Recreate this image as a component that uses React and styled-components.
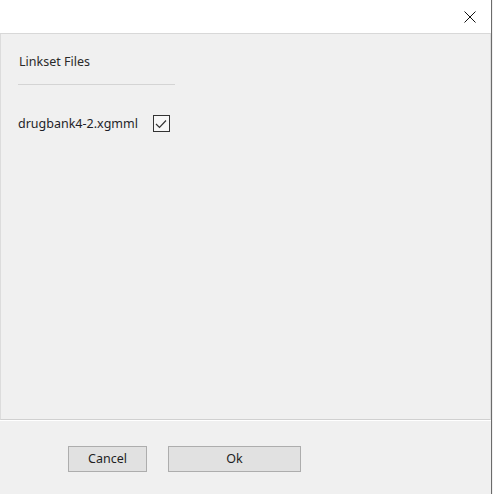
import React from "react";
import styled, { createGlobalStyle } from "styled-components";

const Global = createGlobalStyle`
  html, body {
    margin: 0;
    padding: 0;
    background: #f0f0f0;
  }
  body {
    font-family: "Segoe UI", "Noto Sans", "Liberation Sans", sans-serif;
    font-size: 12.5px;
    color: #1e1e1e;
  }
`;

const Window = styled.div`
  width: 491px;
  height: 494px;
  display: flex;
  flex-direction: column;
  border-right: 1px solid #6b6b6b;
  background: #f0f0f0;
`;

const TitleBar = styled.div`
  height: 33px;
  background: #ffffff;
  border-bottom: 1px solid #d8d8d8;
  display: flex;
  justify-content: flex-end;
  align-items: center;
`;

const CloseButton = styled.div`
  width: 46px;
  height: 33px;
  display: flex;
  align-items: center;
  justify-content: center;
  margin-right: -2px;
`;

const Panel = styled.div`
  flex: 1;
  border-left: 1px solid #dcdcdc;
  border-right: 1px solid #dcdcdc;
  border-bottom: 1px solid #d0d0d0;
  box-shadow: 0 1px 0 #ffffff;
  padding: 15px 0 0 17px;
`;

const SectionTitle = styled.div`
  width: 156px;
  padding: 4px 0 14px 1px;
  border-bottom: 1px solid #d4d4d4;
  color: #2a2a2a;
`;

const FileRow = styled.div`
  display: flex;
  align-items: center;
  gap: 15px;
  margin-top: 30px;
`;

const FileName = styled.span`
  color: #1e1e28;
`;

const CheckBox = styled.div`
  width: 15px;
  height: 15px;
  border: 1px solid #333333;
  background: #f7f7f7;
  display: flex;
  align-items: center;
  justify-content: center;
`;

const Footer = styled.div`
  height: 74px;
  display: flex;
  align-items: flex-start;
  gap: 21px;
  padding: 26px 0 0 68px;
  box-sizing: border-box;
`;

const Button = styled.button`
  width: ${(p) => p.$w}px;
  height: 26px;
  background: #e1e1e1;
  border: 1px solid #adadad;
  font-family: inherit;
  font-size: 12.5px;
  line-height: 22px;
  color: #1e1e1e;
  padding: 0;
`;

export default function App() {
  return (
    <>
      <Global />
      <Window>
        <TitleBar>
          <CloseButton>
            <svg width="12" height="12" viewBox="0 0 12 12">
              <path d="M0.5 0.5 L11.5 11.5 M11.5 0.5 L0.5 11.5" stroke="#111" strokeWidth="1" />
            </svg>
          </CloseButton>
        </TitleBar>
        <Panel>
          <SectionTitle>Linkset Files</SectionTitle>
          <FileRow>
            <FileName>drugbank4-2.xgmml</FileName>
            <CheckBox>
              <svg width="12" height="10" viewBox="0 0 12 10">
                <path d="M1 5 L4.5 8.5 L11 1.5" fill="none" stroke="#333" strokeWidth="1.2" />
              </svg>
            </CheckBox>
          </FileRow>
        </Panel>
        <Footer>
          <Button $w={79}>Cancel</Button>
          <Button $w={133}>Ok</Button>
        </Footer>
      </Window>
    </>
  );
}
